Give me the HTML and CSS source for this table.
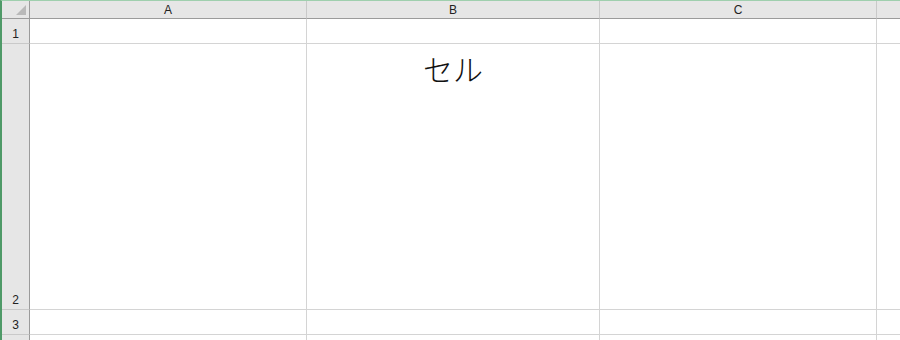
FILE: index.html
```html
<!DOCTYPE html>
<html lang="ja">
<head>
<meta charset="utf-8">
<title>Sheet</title>
<link rel="stylesheet" href="styles.css">
</head>
<body>
<div class="sheet">
  <div class="grid">
    <div class="hdr corner"><span class="tri"></span></div>
    <div class="hdr col">A</div>
    <div class="hdr col">B</div>
    <div class="hdr col">C</div>
    <div class="hdr col last"></div>

    <div class="hdr row">1</div>
    <div class="cell"></div>
    <div class="cell"></div>
    <div class="cell"></div>
    <div class="cell"></div>

    <div class="hdr row">2</div>
    <div class="cell"></div>
    <div class="cell big">セル</div>
    <div class="cell"></div>
    <div class="cell"></div>

    <div class="hdr row">3</div>
    <div class="cell"></div>
    <div class="cell"></div>
    <div class="cell"></div>
    <div class="cell"></div>

    <div class="hdr row"></div>
    <div class="cell"></div>
    <div class="cell"></div>
    <div class="cell"></div>
    <div class="cell"></div>
  </div>
</div>
</body>
</html>
```
FILE: styles.css
```css
html, body {
  margin: 0;
  padding: 0;
  background: #ffffff;
}
.sheet {
  width: 900px;
  height: 340px;
  box-sizing: border-box;
  border-left: 2px solid #4f9a68;
  border-top: 1px solid #9fcfae;
  overflow: hidden;
  font-family: "Liberation Sans", Arial, sans-serif;
  font-size: 12px;
  color: #222;
}
.grid {
  display: grid;
  grid-template-columns: 28px 277px 293px 277px 40px;
  grid-template-rows: 18px 25px 266px 25px 40px;
}
.grid > div {
  box-sizing: border-box;
}
.hdr {
  background: #e6e6e6;
}
.col {
  border-right: 1px solid #c9c9c9;
  border-bottom: 1px solid #9b9b9b;
  display: flex;
  align-items: flex-end;
  justify-content: center;
  padding-bottom: 1px;
  line-height: 14px;
}
.corner {
  border-right: 1px solid #9b9b9b;
  border-bottom: 1px solid #9b9b9b;
  position: relative;
}
.tri {
  position: absolute;
  right: 3px;
  bottom: 3px;
  width: 0;
  height: 0;
  border-left: 10px solid transparent;
  border-bottom: 10px solid #b9b9b9;
}
.row {
  border-right: 1px solid #9b9b9b;
  border-bottom: 1px solid #c9c9c9;
  display: flex;
  align-items: flex-end;
  justify-content: center;
  padding-bottom: 2px;
  line-height: 14px;
}
.cell {
  border-right: 1px solid #d4d4d4;
  border-bottom: 1px solid #d4d4d4;
}
.big {
  font-family: "Noto Sans CJK JP", "Noto Sans CJK SC", sans-serif;
  font-size: 30px;
  font-weight: 300;
  line-height: 30px;
  color: #111;
  text-align: center;
  padding-top: 9px;
}
```
